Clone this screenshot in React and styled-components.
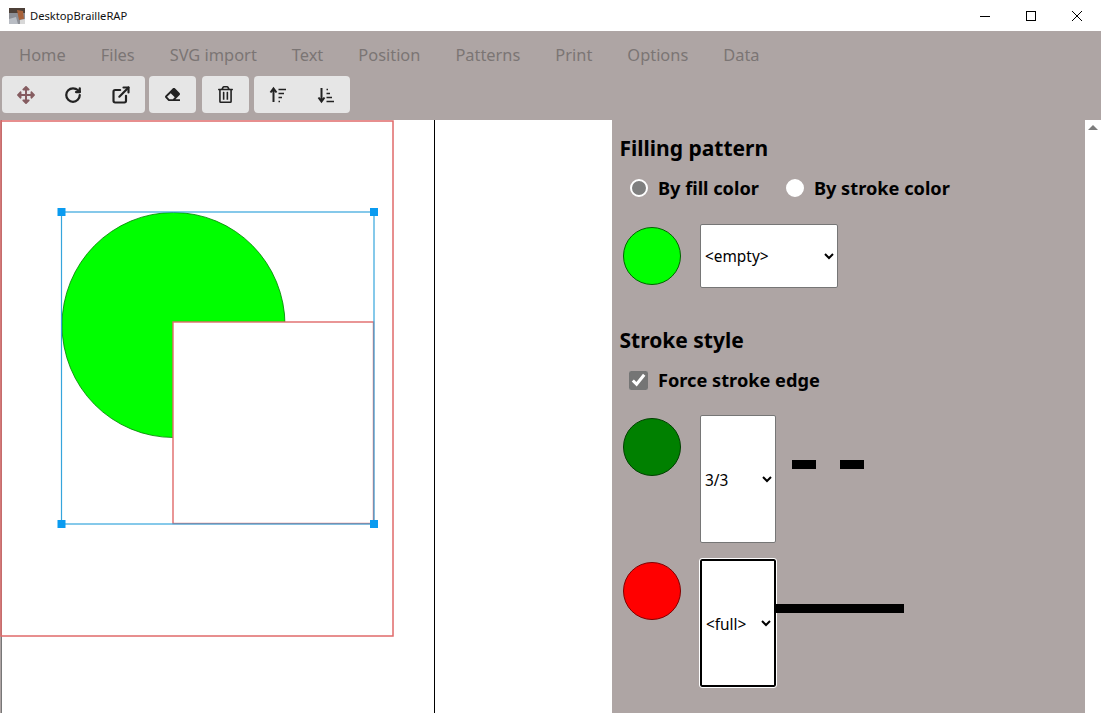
import styled, { createGlobalStyle } from "styled-components";
import { FaArrowsAlt, FaEraser, FaRegTrashAlt } from "react-icons/fa";
import { RotateCw, ExternalLink } from "lucide-react";

const GlobalStyle = createGlobalStyle`
  html, body {
    margin: 0;
    height: 100%;
    overflow: hidden;
    font-family: "Noto Sans", "Open Sans", "Liberation Sans", sans-serif;
  }
`;

const Window = styled.div`
  width: 1101px;
  height: 713px;
  display: flex;
  flex-direction: column;
  background: #aea5a4;
`;

const TitleBar = styled.div`
  height: 31px;
  flex: none;
  display: flex;
  align-items: center;
  background: #fff;
  padding-left: 9px;
`;

const AppName = styled.span`
  margin-left: 5px;
  font-size: 11.2px;
  color: #111;
`;

const WindowControls = styled.div`
  margin-left: auto;
  margin-right: 1px;
  display: flex;
`;

const WindowControl = styled.div`
  width: 46px;
  height: 31px;
  display: flex;
  align-items: center;
  justify-content: center;
`;

const Nav = styled.nav`
  height: 45px;
  flex: none;
  display: flex;
  align-items: center;
  gap: 35px;
  padding-left: 19px;
  padding-top: 1px;
  box-sizing: border-box;
`;

const NavLink = styled.a`
  font-size: 16.4px;
  color: #7b7574;
`;

const Toolbar = styled.div`
  height: 37px;
  flex: none;
  display: flex;
  padding-left: 2px;
`;

const ButtonGroup = styled.div`
  display: flex;
  margin-right: ${(p) => p.$gap}px;
`;

const ToolButton = styled.button`
  width: ${(p) => p.$width || 48}px;
  height: 37px;
  border: none;
  padding: 0;
  background: #e6e6e6;
  color: ${(p) => p.$color || "#222"};
  display: flex;
  align-items: center;
  justify-content: center;

  &:first-child {
    border-radius: 4px 0 0 4px;
  }
  &:last-child {
    border-radius: 0 4px 4px 0;
  }
  &:only-child {
    border-radius: 4px;
  }
`;

const Main = styled.div`
  margin-top: 7px;
  flex: 1;
  min-height: 0;
  display: grid;
  grid-template-columns: 612px 473px 16px;
`;

const Canvas = styled.svg`
  display: block;
  width: 612px;
  height: 593px;
  background: #fff;
`;

const Panel = styled.div`
  padding: 13px 0 0 7.5px;
  overflow: hidden;
`;

const Heading = styled.h2`
  margin: ${(p) => p.$top || 0}px 0 0;
  font-size: 21px;
  line-height: 30px;
  font-weight: 700;
  color: #000;
`;

const OptionRow = styled.div`
  display: flex;
  align-items: center;
  height: 28px;
  margin: 11px 0 0 10.5px;
`;

const OptionLabel = styled.label`
  display: flex;
  align-items: center;
  margin-right: 27px;
  font-size: 18.2px;
  font-weight: 700;
  color: #000;
`;

const Radio = styled.input.attrs({ type: "radio" })`
  appearance: none;
  width: 18px;
  height: 18px;
  margin: 0 10px 0 0;
  border-radius: 50%;
  box-sizing: border-box;
  background: #fff;
  border: 2.5px solid #fff;

  &:checked {
    background: #7f7f7f;
  }
`;

const Check = styled.input.attrs({ type: "checkbox" })`
  width: 19px;
  height: 19px;
  margin: 0 10px 0 -1px;
  accent-color: #757575;
`;

const StyleRow = styled.div`
  display: flex;
  align-items: flex-start;
  margin: ${(p) => p.$top}px 0 0 3.5px;
`;

const Swatch = styled.div`
  width: 58px;
  height: 58px;
  margin: 3px 19px 0 0;
  flex: none;
  box-sizing: border-box;
  border-radius: 50%;
  border: 1px solid ${(p) => p.$edge};
  background: ${(p) => p.$fill};
`;

const PatternSelect = styled.select`
  width: ${(p) => p.$width}px;
  height: ${(p) => p.$height}px;
  flex: none;
  box-sizing: border-box;
  padding-top: ${(p) => (p.$height > 100 ? 2 : 0)}px;
  background: #fff;
  color: #000;
  font-family: "Noto Sans", "Open Sans", sans-serif;
  font-size: 15.4px;
  border-radius: 2px;
  border: ${(p) => (p.$focused ? "2px solid #000" : "1px solid #767676")};
  outline: ${(p) => (p.$focused ? "1px solid #fff" : "none")};
`;

const Preview = styled.svg`
  display: block;
  flex: none;
`;

const Scrollbar = styled.div`
  background: #fff;
  display: flex;
  justify-content: center;
  padding-top: 5px;
`;

const ScrollArrow = styled.div`
  width: 0;
  height: 0;
  border-left: 5px solid transparent;
  border-right: 5px solid transparent;
  border-bottom: 5px solid #7d7d7d;
`;

function AppIcon() {
  return (
    <svg width="16" height="16" viewBox="0 0 16 16">
      <rect width="16" height="16" fill="#8d8f96" />
      <rect width="16" height="5" fill="#4d4038" />
      <path d="M8 2 L14 3 L15 11 L10 12 Z" fill="#a8623a" />
      <path d="M0 11 L7 9 L9 16 L0 16 Z" fill="#b9bdc4" />
      <path d="M11 12 L16 11 L16 16 L11 16 Z" fill="#d8d8d8" />
    </svg>
  );
}

function SortIcon({ up }) {
  return (
    <svg width="18" height="18" viewBox="0 0 18 18" fill="none" stroke="#222">
      {up ? (
        <path d="M4.5 16V3M1.5 6.5L4.5 2.5L7.5 6.5" strokeWidth="2" />
      ) : (
        <path d="M4.5 2V15M1.5 11.5L4.5 15.5L7.5 11.5" strokeWidth="2" />
      )}
      {up ? (
        <path d="M9.5 3.5H17M9.5 7.5H15M9.5 11.5H13M9.5 15.5H11" strokeWidth="1.3" />
      ) : (
        <path d="M9.5 3.5H11M9.5 7.5H13M9.5 11.5H15M9.5 15.5H17" strokeWidth="1.3" />
      )}
    </svg>
  );
}

const navItems = ["Home", "Files", "SVG import", "Text", "Position", "Patterns", "Print", "Options", "Data"];

const handles = [
  [61.5, 92],
  [374, 92],
  [61.5, 404],
  [374, 404],
];

export default function App() {
  return (
    <Window>
      <GlobalStyle />
      <TitleBar>
        <AppIcon />
        <AppName>DesktopBrailleRAP</AppName>
        <WindowControls>
          <WindowControl>
            <svg width="10" height="10" viewBox="0 0 10 10">
              <path d="M0 5.5H10" stroke="#000" />
            </svg>
          </WindowControl>
          <WindowControl>
            <svg width="10" height="10" viewBox="0 0 10 10">
              <rect x="0.5" y="0.5" width="9" height="9" fill="none" stroke="#000" />
            </svg>
          </WindowControl>
          <WindowControl>
            <svg width="10" height="10" viewBox="0 0 10 10">
              <path d="M0 0L10 10M10 0L0 10" stroke="#000" />
            </svg>
          </WindowControl>
        </WindowControls>
      </TitleBar>

      <Nav>
        {navItems.map((item) => (
          <NavLink key={item}>{item}</NavLink>
        ))}
      </Nav>

      <Toolbar>
        <ButtonGroup $gap={4}>
          <ToolButton $color="#855c60" $width={47}>
            <FaArrowsAlt size={18} />
          </ToolButton>
          <ToolButton $width={48}>
            <RotateCw size={18} strokeWidth={3} />
          </ToolButton>
          <ToolButton $width={48}>
            <ExternalLink size={20} strokeWidth={2.6} />
          </ToolButton>
        </ButtonGroup>
        <ButtonGroup $gap={6}>
          <ToolButton $width={47}>
            <FaEraser size={15} />
          </ToolButton>
        </ButtonGroup>
        <ButtonGroup $gap={5}>
          <ToolButton $width={47}>
            <FaRegTrashAlt size={17} />
          </ToolButton>
        </ButtonGroup>
        <ButtonGroup $gap={0}>
          <ToolButton $width={48}>
            <SortIcon up />
          </ToolButton>
          <ToolButton $width={48}>
            <SortIcon />
          </ToolButton>
        </ButtonGroup>
      </Toolbar>

      <Main>
        <Canvas viewBox="0 0 612 593">
          <path d="M0.5 0V593" stroke="#aea5a4" />
          <path d="M1.5 0V593" stroke="#777" />
          <rect x="1" y="1" width="392" height="515" fill="none" stroke="#e06a6a" strokeWidth="1.5" />
          <path d="M434.5 0V593" stroke="#000" />
          <path
            d="M173.5 205H285A111.5 112.5 0 1 0 173.5 317.5Z"
            fill="#00ff00"
            stroke="#008000"
            strokeWidth="0.8"
          />
          <rect x="173" y="202" width="200.5" height="201.5" fill="#fff" stroke="#e06a6a" strokeWidth="1.4" />
          <rect x="61.5" y="92" width="312.5" height="312" fill="none" stroke="#35a5dc" strokeWidth="1.2" />
          {handles.map(([x, y]) => (
            <rect key={`${x}-${y}`} x={x - 4} y={y - 4} width="8" height="8" fill="#0a9bf0" />
          ))}
        </Canvas>

        <Panel>
          <Heading>Filling pattern</Heading>
          <OptionRow>
            <OptionLabel>
              <Radio name="fill" defaultChecked />
              By fill color
            </OptionLabel>
            <OptionLabel>
              <Radio name="fill" />
              By stroke color
            </OptionLabel>
          </OptionRow>
          <StyleRow $top={22}>
            <Swatch $fill="#00ff00" $edge="#006400" />
            <PatternSelect $width={138} $height={64}>
              <option>&lt;empty&gt;</option>
            </PatternSelect>
          </StyleRow>

          <Heading $top={37}>Stroke style</Heading>
          <OptionRow>
            <OptionLabel>
              <Check defaultChecked />
              Force stroke edge
            </OptionLabel>
          </OptionRow>
          <StyleRow $top={21}>
            <Swatch $fill="#008000" $edge="#004000" />
            <PatternSelect $width={76} $height={128}>
              <option>3/3</option>
            </PatternSelect>
            <Preview width="128" height="100">
              <path d="M16 49.5H88" stroke="#000" strokeWidth="9" strokeDasharray="24 24" />
            </Preview>
          </StyleRow>
          <StyleRow $top={16}>
            <Swatch $fill="#ff0000" $edge="#800000" />
            <PatternSelect $width={76} $height={128} $focused>
              <option>&lt;full&gt;</option>
            </PatternSelect>
            <Preview width="128" height="100">
              <path d="M0 49.5H128" stroke="#000" strokeWidth="9" />
            </Preview>
          </StyleRow>
        </Panel>

        <Scrollbar>
          <ScrollArrow />
        </Scrollbar>
      </Main>
    </Window>
  );
}
